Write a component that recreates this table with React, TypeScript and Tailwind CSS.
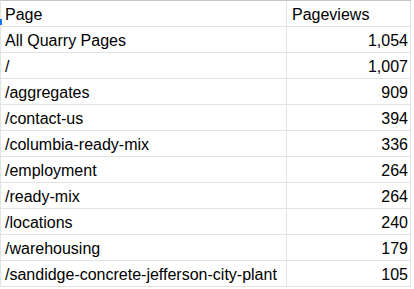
const rows: [string, string][] = [
  ['All Quarry Pages', '1,054'],
  ['/', '1,007'],
  ['/aggregates', '909'],
  ['/contact-us', '394'],
  ['/columbia-ready-mix', '336'],
  ['/employment', '264'],
  ['/ready-mix', '264'],
  ['/locations', '240'],
  ['/warehousing', '179'],
  ['/sandidge-concrete-jefferson-city-plant', '105'],
];

export default function App() {
  return (
    <div className="relative w-[414px] h-[289px] overflow-hidden bg-white text-black font-['Liberation_Sans',Arial,sans-serif] text-[16px] leading-[18px]">
      <div className="w-[411px] border-t border-[#c4c4c4] border-l border-l-[#e2e3e3]">
        <div className="grid grid-cols-[286px_124px] h-[26px] border-b border-[#e2e3e3]">
          <div className="flex items-end pl-[4px] pb-[2px] border-r border-[#e2e3e3]">Page</div>
          <div className="flex items-end pl-[5px] pb-[2px] border-r border-[#e2e3e3]">Pageviews</div>
        </div>
        {rows.map(([page, views]) => (
          <div key={page} className="grid grid-cols-[286px_124px] h-[26px] border-b border-[#e2e3e3]">
            <div className="flex items-end pl-[4px] pb-[2px] border-r border-[#e2e3e3] whitespace-nowrap">{page}</div>
            <div className="flex items-end justify-end pr-[2px] pb-[2px] border-r border-[#e2e3e3]">{views}</div>
          </div>
        ))}
      </div>
      {/* selection edge marker */}
      <div className="absolute left-0 top-[19px] w-[2px] h-[6px] bg-[#1a73e8]" />
    </div>
  );
}
